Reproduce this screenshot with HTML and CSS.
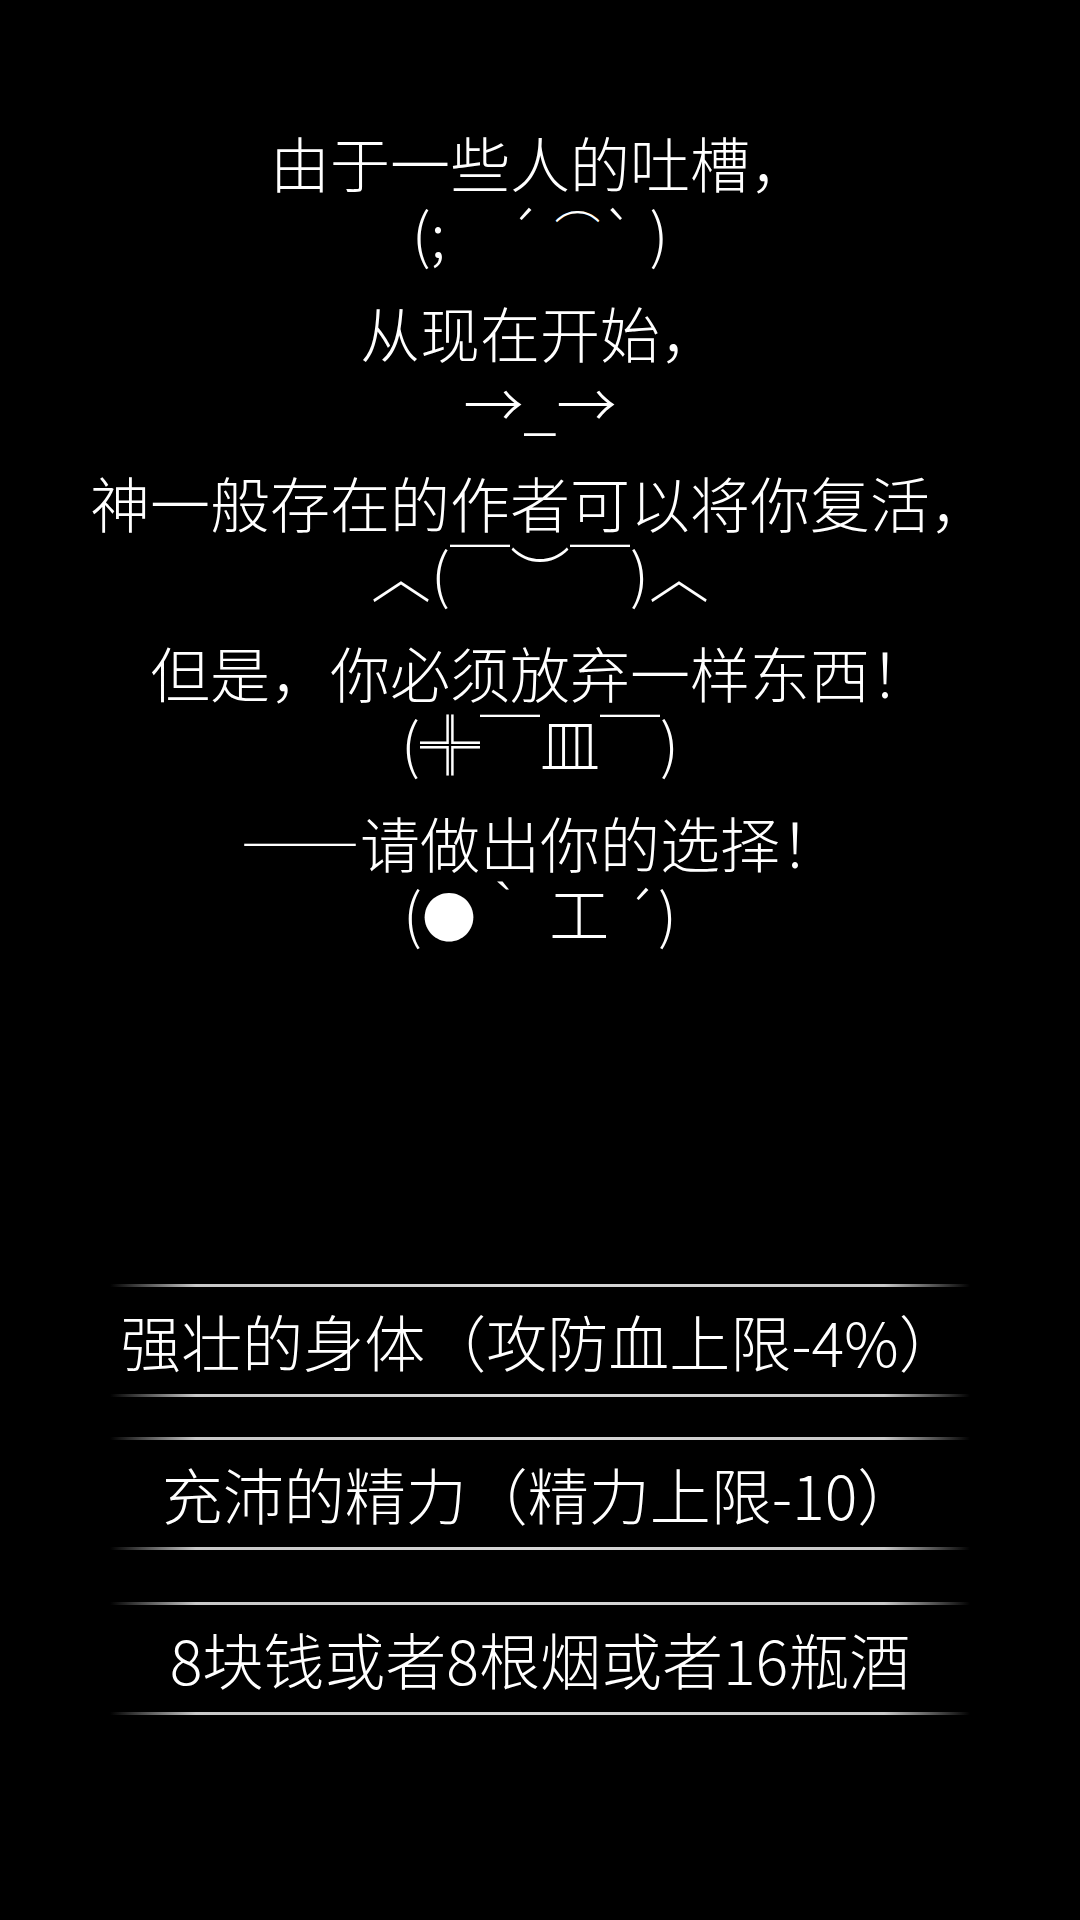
FILE: index.html
```html
<!DOCTYPE html>
<html lang="zh-CN">

<head>
    <meta charset="UTF-8">
    <meta name="viewport" content="width=device-width, initial-scale=1.0">
    <title>复活</title>
    <link rel="stylesheet" href="styles.css">
</head>

<body>
    <!-- Story text: each line is followed by a face -->
    <div class="story">
        <div class="pair">
            <p class="line">由于一些人的吐槽，</p>
            <p class="face">(;　´&nbsp;<span class="brow">⌒</span>`&nbsp;)</p>
        </div>
        <div class="pair">
            <p class="line">从现在开始，</p>
            <p class="face">→_→</p>
        </div>
        <div class="pair">
            <p class="line">神一般存在的作者可以将你复活，</p>
            <p class="face">︿(￣︶￣)︿</p>
        </div>
        <div class="pair">
            <p class="line">但是，你必须放弃一样东西！</p>
            <p class="face">(╬￣皿￣)</p>
        </div>
        <div class="pair">
            <p class="line">——请做出你的选择！</p>
            <p class="face">(<span class="eye">●</span>｀&nbsp;工&nbsp;´)</p>
        </div>
    </div>

    <!-- Choices -->
    <div class="choices">
        <div class="choice" onclick="pick(0)">强壮的身体（攻防血上限-4%）</div>
        <div class="choice" onclick="pick(1)">充沛的精力（精力上限-10）</div>
        <div class="choice" onclick="pick(2)">8块钱或者8根烟或者16瓶酒</div>
    </div>

    <script>
        function pick(index) {
            document.querySelectorAll('.choice').forEach(c => c.classList.remove('picked'));
            document.querySelectorAll('.choice')[index].classList.add('picked');
        }
    </script>
</body>

</html>
```

FILE: styles.css
```css
body {
    margin: 0;
    padding: 0;
    width: 1080px;
    height: 1920px;
    background-color: #000;
    color: #fff;
    font-family: "Noto Sans CJK SC", sans-serif;
    font-weight: 300;
    font-size: 60px;
}

p {
    margin: 0;
}

.story {
    padding-top: 127px;
    text-align: center;
}

.pair {
    margin-bottom: 30px;
}

.line,
.face {
    line-height: 70px;
    white-space: nowrap;
}

/* the frown arc sits a bit higher and narrower than the font's own */
.brow {
    font-size: 46px;
    line-height: 40px;
    vertical-align: 8px;
}

.eye {
    font-size: 54px;
    line-height: 40px;
}

.choices {
    margin-top: 337px;
    padding: 0 110px;
}

.choice {
    display: flex;
    flex-direction: column;
    text-align: center;
    font-size: 61px;
    line-height: 107px;
    cursor: pointer;
}

.choice + .choice {
    margin-top: 40px;
}

.choice:nth-child(3) {
    margin-top: 52px;
}

/* the thin bars above and below each choice fade out at both ends */
.choice::before,
.choice::after {
    content: "";
    display: block;
    height: 3px;
    background: linear-gradient(to right, rgba(200, 200, 200, 0), #c8c8c8 10%, #d8d8d8 50%, #c8c8c8 90%, rgba(200, 200, 200, 0));
}

.choice.picked {
    color: #ffd54a;
}
```
